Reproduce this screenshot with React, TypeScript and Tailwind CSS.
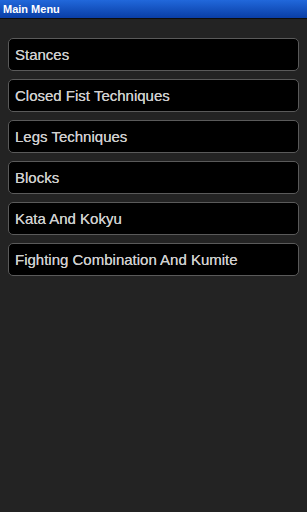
const items = [
  "Stances",
  "Closed Fist Techniques",
  "Legs Techniques",
  "Blocks",
  "Kata And Kokyu",
  "Fighting Combination And Kumite",
];

export default function App() {
  return (
    <div
      className="w-[307px] h-[512px] bg-[#232323] flex flex-col overflow-hidden"
      style={{ fontFamily: '"Liberation Sans", Arial, sans-serif' }}
    >
      {/* title bar */}
      <div className="h-[18px] bg-gradient-to-b from-[#2168db] to-[#0a3ea6] flex items-center px-[3px] border-b border-[#0d0d0d] box-content">
        <span className="text-[11px] font-bold text-white leading-none">Main Menu</span>
      </div>

      {/* menu list */}
      <div className="flex flex-col gap-[8px] pt-[19px] px-[8px]">
        {items.map((label) => (
          <div
            key={label}
            className="h-[33px] rounded-[5px] border border-[#5a5a5a] bg-black flex items-center pl-[6px] pt-[1px]"
          >
            <span className="text-[15px] text-[#cfcfcf] [text-shadow:0_0_0.4px_#cfcfcf]">{label}</span>
          </div>
        ))}
      </div>
    </div>
  );
}
